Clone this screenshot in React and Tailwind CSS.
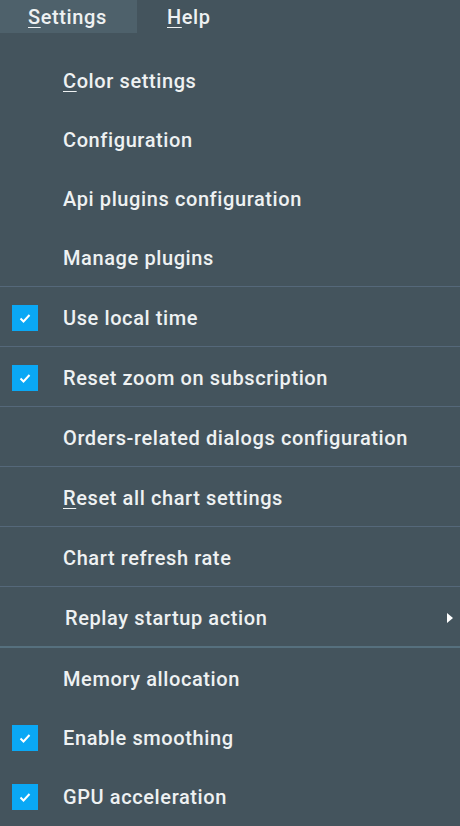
import { Fragment } from 'react'

const items = [
  { label: 'Color settings', u: 'C' },
  { label: 'Configuration' },
  { label: 'Api plugins configuration' },
  { label: 'Manage plugins', sep: true },
  { label: 'Use local time', checked: true, sep: true },
  { label: 'Reset zoom on subscription', checked: true, sep: true },
  { label: 'Orders-related dialogs configuration', sep: true },
  { label: 'Reset all chart settings', u: 'R', sep: true },
  { label: 'Chart refresh rate', sep: true },
  { label: 'Replay startup action', sub: true, sep: true, thick: true },
  { label: 'Memory allocation' },
  { label: 'Enable smoothing', checked: true },
  { label: 'GPU acceleration', checked: true },
]

function Check() {
  return (
    <div className="w-[26px] h-[26px] bg-[#0aa8f5] flex items-center justify-center">
      <svg width="16" height="16" viewBox="0 0 16 16">
        <path d="M3.5 8.5 L6.5 11.5 L12.5 5" fill="none" stroke="#ffffff" strokeWidth="2" />
      </svg>
    </div>
  )
}

function Label({ text, u }) {
  if (!u) return text
  return (
    <>
      <span className="underline underline-offset-[3px] decoration-1">{text[0]}</span>
      {text.slice(1)}
    </>
  )
}

export default function App() {
  return (
    <div className="w-[460px] h-[826px] bg-[#44545d] text-[#eef1f2] overflow-hidden tracking-[0.6px]" style={{ fontFamily: 'Roboto, sans-serif' }}>
      <div className="flex h-[33px] text-[20px] font-medium">
        <div className="w-[137px] bg-[#4e616b] flex items-center pl-[28px]">
          <Label text="Settings" u="S" />
        </div>
        <div className="flex items-center pl-[30px]">
          <Label text="Help" u="H" />
        </div>
      </div>
      <div className="pt-[17px] text-[20px] font-medium">
        {items.map((it, i) => (
          <Fragment key={i}>
            <div className="h-[59px] pt-[2px] flex items-center relative">
              <div className="w-[63px] pl-[12px] flex items-center">
                {it.checked && <Check />}
              </div>
              <div className={it.sub ? 'pl-[2px]' : ''}>
                <Label text={it.label} u={it.u} />
              </div>
              {it.sub && (
                <svg className="absolute right-[7px]" width="6" height="10" viewBox="0 0 6 10">
                  <path d="M0 0 L6 5 L0 10 Z" fill="#ffffff" />
                </svg>
              )}
            </div>
            {it.sep && <div className={it.thick ? 'h-[2px] bg-[#56707e]' : 'h-px bg-[#55687a]'} />}
          </Fragment>
        ))}
      </div>
    </div>
  )
}
